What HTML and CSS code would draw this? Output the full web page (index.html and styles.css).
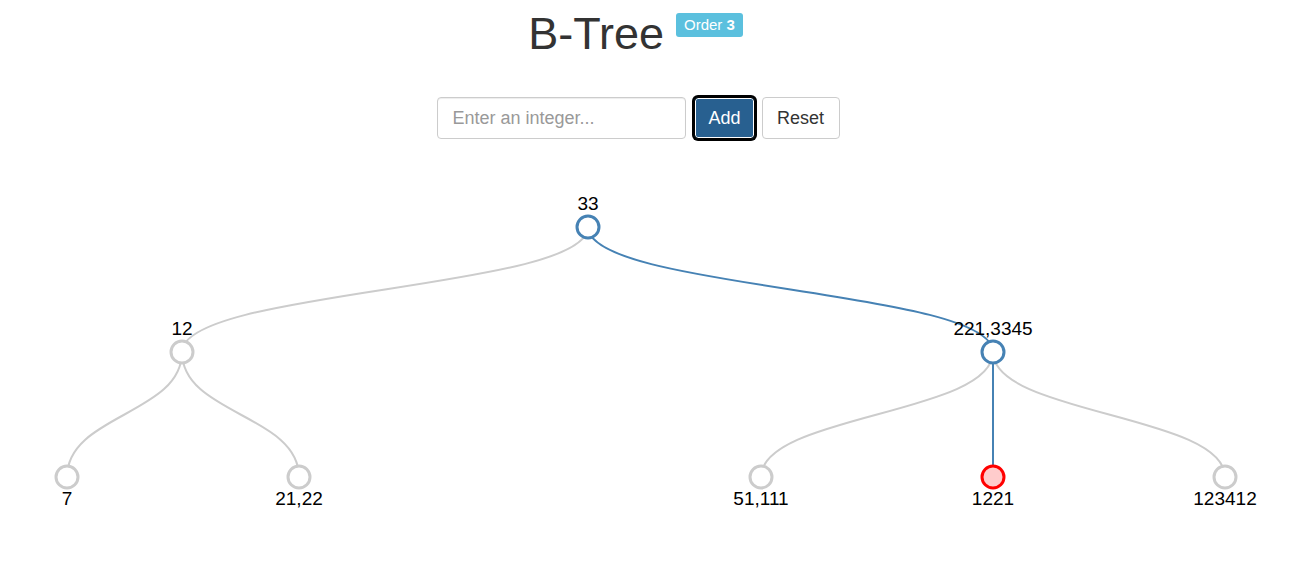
FILE: index.html
```html
<!DOCTYPE html>
<html>
<head>
<meta charset="utf-8">
<title>B-Tree</title>
<link rel="stylesheet" href="styles.css">
</head>
<body>
<div class="page">
  <header class="title-row">
    <h1 class="title">B-Tree</h1>
    <span class="badge">Order <b>3</b></span>
  </header>
  <form class="controls">
    <input class="field" type="text" placeholder="Enter an integer...">
    <button type="button" class="btn btn-primary">Add</button>
    <button type="button" class="btn btn-default">Reset</button>
  </form>
</div>
<svg class="tree" width="1307" height="403" viewBox="0 0 1307 403">
  <g class="links">
    <path class="link" d="M588,67 C588,129.5 182,129.5 182,192"/>
    <path class="link active" d="M588,67 C588,129.5 993,129.5 993,192"/>
    <path class="link" d="M182,192 C182,254.5 67,254.5 67,317"/>
    <path class="link" d="M182,192 C182,254.5 299,254.5 299,317"/>
    <path class="link" d="M993,192 C993,254.5 761,254.5 761,317"/>
    <path class="link active" d="M993,192 C993,254.5 993,254.5 993,317"/>
    <path class="link" d="M993,192 C993,254.5 1225,254.5 1225,317"/>
  </g>
  <g class="nodes">
    <circle class="node active" cx="588" cy="67" r="11"/>
    <text class="label" x="588" y="50">33</text>
    <circle class="node" cx="182" cy="192" r="11"/>
    <text class="label" x="182" y="175">12</text>
    <circle class="node active" cx="993" cy="192" r="11"/>
    <text class="label" x="993" y="175">221,3345</text>
    <circle class="node" cx="67" cy="317" r="11"/>
    <text class="label" x="67" y="345">7</text>
    <circle class="node" cx="299" cy="317" r="11"/>
    <text class="label" x="299" y="345">21,22</text>
    <circle class="node" cx="761" cy="317" r="11"/>
    <text class="label" x="761" y="345">51,111</text>
    <circle class="node found" cx="993" cy="317" r="11"/>
    <text class="label" x="993" y="345">1221</text>
    <circle class="node" cx="1225" cy="317" r="11"/>
    <text class="label" x="1225" y="345">123412</text>
  </g>
</svg>
</body>
</html>
```

FILE: styles.css
```css
html, body {
  margin: 0;
  padding: 0;
  background: #fff;
}
body {
  font-family: "Liberation Sans", Arial, sans-serif;
  color: #333;
  width: 1307px;
  height: 563px;
  overflow: hidden;
}
.page {
  width: 1276px;
}
.title-row {
  display: flex;
  justify-content: center;
  align-items: flex-start;
  gap: 12px;
  padding-top: 7px;
  padding-right: 5px;
  height: 89px;
  box-sizing: border-box;
}
.title {
  margin: 0;
  font-size: 45px;
  font-weight: 400;
  line-height: 54px;
  color: #333;
}
.badge {
  margin-top: 6px;
  background: #5bc0de;
  color: #fff;
  font-size: 15px;
  line-height: 24px;
  height: 24px;
  padding: 0 8px;
  border-radius: 3px;
  white-space: nowrap;
}
.badge b {
  font-weight: 700;
}
.controls {
  display: flex;
  justify-content: center;
  gap: 8px;
  margin: 8px 0 0 0;
  height: 42px;
}
.field {
  width: 249px;
  height: 42px;
  box-sizing: border-box;
  border: 1px solid #ccc;
  border-radius: 4px;
  padding: 0 15px;
  font-family: "Liberation Sans", Arial, sans-serif;
  font-size: 18px;
  color: #555;
  box-shadow: inset 0 1px 1px rgba(0,0,0,0.075);
  outline: none;
}
.field::placeholder {
  color: #999;
}
.btn {
  height: 42px;
  box-sizing: border-box;
  border-radius: 4px;
  font-family: "Liberation Sans", Arial, sans-serif;
  font-size: 18px;
  padding: 0 14px;
  cursor: pointer;
}
.btn-primary {
  width: 61px;
  background: #286090;
  color: #fff;
  border: 1px solid #122b40;
  box-shadow: 0 0 0 1px #fff inset, 0 0 0 2px #000;
  outline: 1px solid #000;
  outline-offset: -1px;
}
.btn-default {
  width: 78px;
  margin-left: -1px;
  background: #fff;
  color: #333;
  border: 1px solid #ccc;
}
.tree {
  display: block;
  margin-top: 21px;
}
.link {
  fill: none;
  stroke: #ccc;
  stroke-width: 2px;
}
.link.active {
  stroke: #4682b4;
}
.node {
  fill: #fff;
  stroke: #ccc;
  stroke-width: 3px;
}
.node.active {
  stroke: #4682b4;
}
.node.found {
  stroke: #ff0000;
  fill: #ffcccc;
}
.label {
  font-family: "Liberation Sans", Arial, sans-serif;
  font-size: 19px;
  fill: #000;
  text-anchor: middle;
}
```
